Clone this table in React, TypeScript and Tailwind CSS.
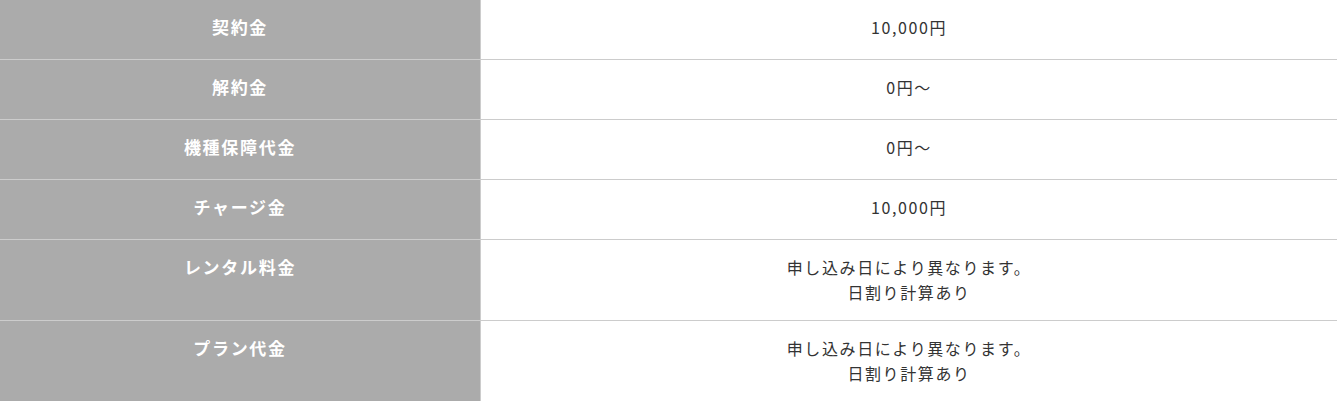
import React from "react";

const rows: { label: string; value: string[] }[] = [
  { label: "契約金", value: ["10,000円"] },
  { label: "解約金", value: ["0円～"] },
  { label: "機種保障代金", value: ["0円～"] },
  { label: "チャージ金", value: ["10,000円"] },
  { label: "レンタル料金", value: ["申し込み日により異なります。", "日割り計算あり"] },
  { label: "プラン代金", value: ["申し込み日により異なります。", "日割り計算あり"] },
];

export default function App() {
  return (
    <div
      className="w-[1337px] bg-white"
      style={{ fontFamily: '"Noto Sans CJK JP", "Noto Sans", sans-serif' }}
    >
      <div className="grid grid-cols-[481px_1fr]">
        {rows.map((r) => (
          <React.Fragment key={r.label}>
            <div className="min-h-[60px] bg-[#ababab] border-r border-b border-[#cccccc] pt-[15px] pb-[15px] text-center text-[17px] leading-[24px] tracking-[0.1em] font-bold text-white">
              {r.label}
            </div>
            <div className="min-h-[60px] border-b border-[#cccccc] pt-[15px] pb-[15px] text-center text-[16px] leading-[25px] tracking-[0.1em] text-[#333333]">
              {r.value.map((v) => (
                <div key={v}>{v}</div>
              ))}
            </div>
          </React.Fragment>
        ))}
      </div>
    </div>
  );
}
